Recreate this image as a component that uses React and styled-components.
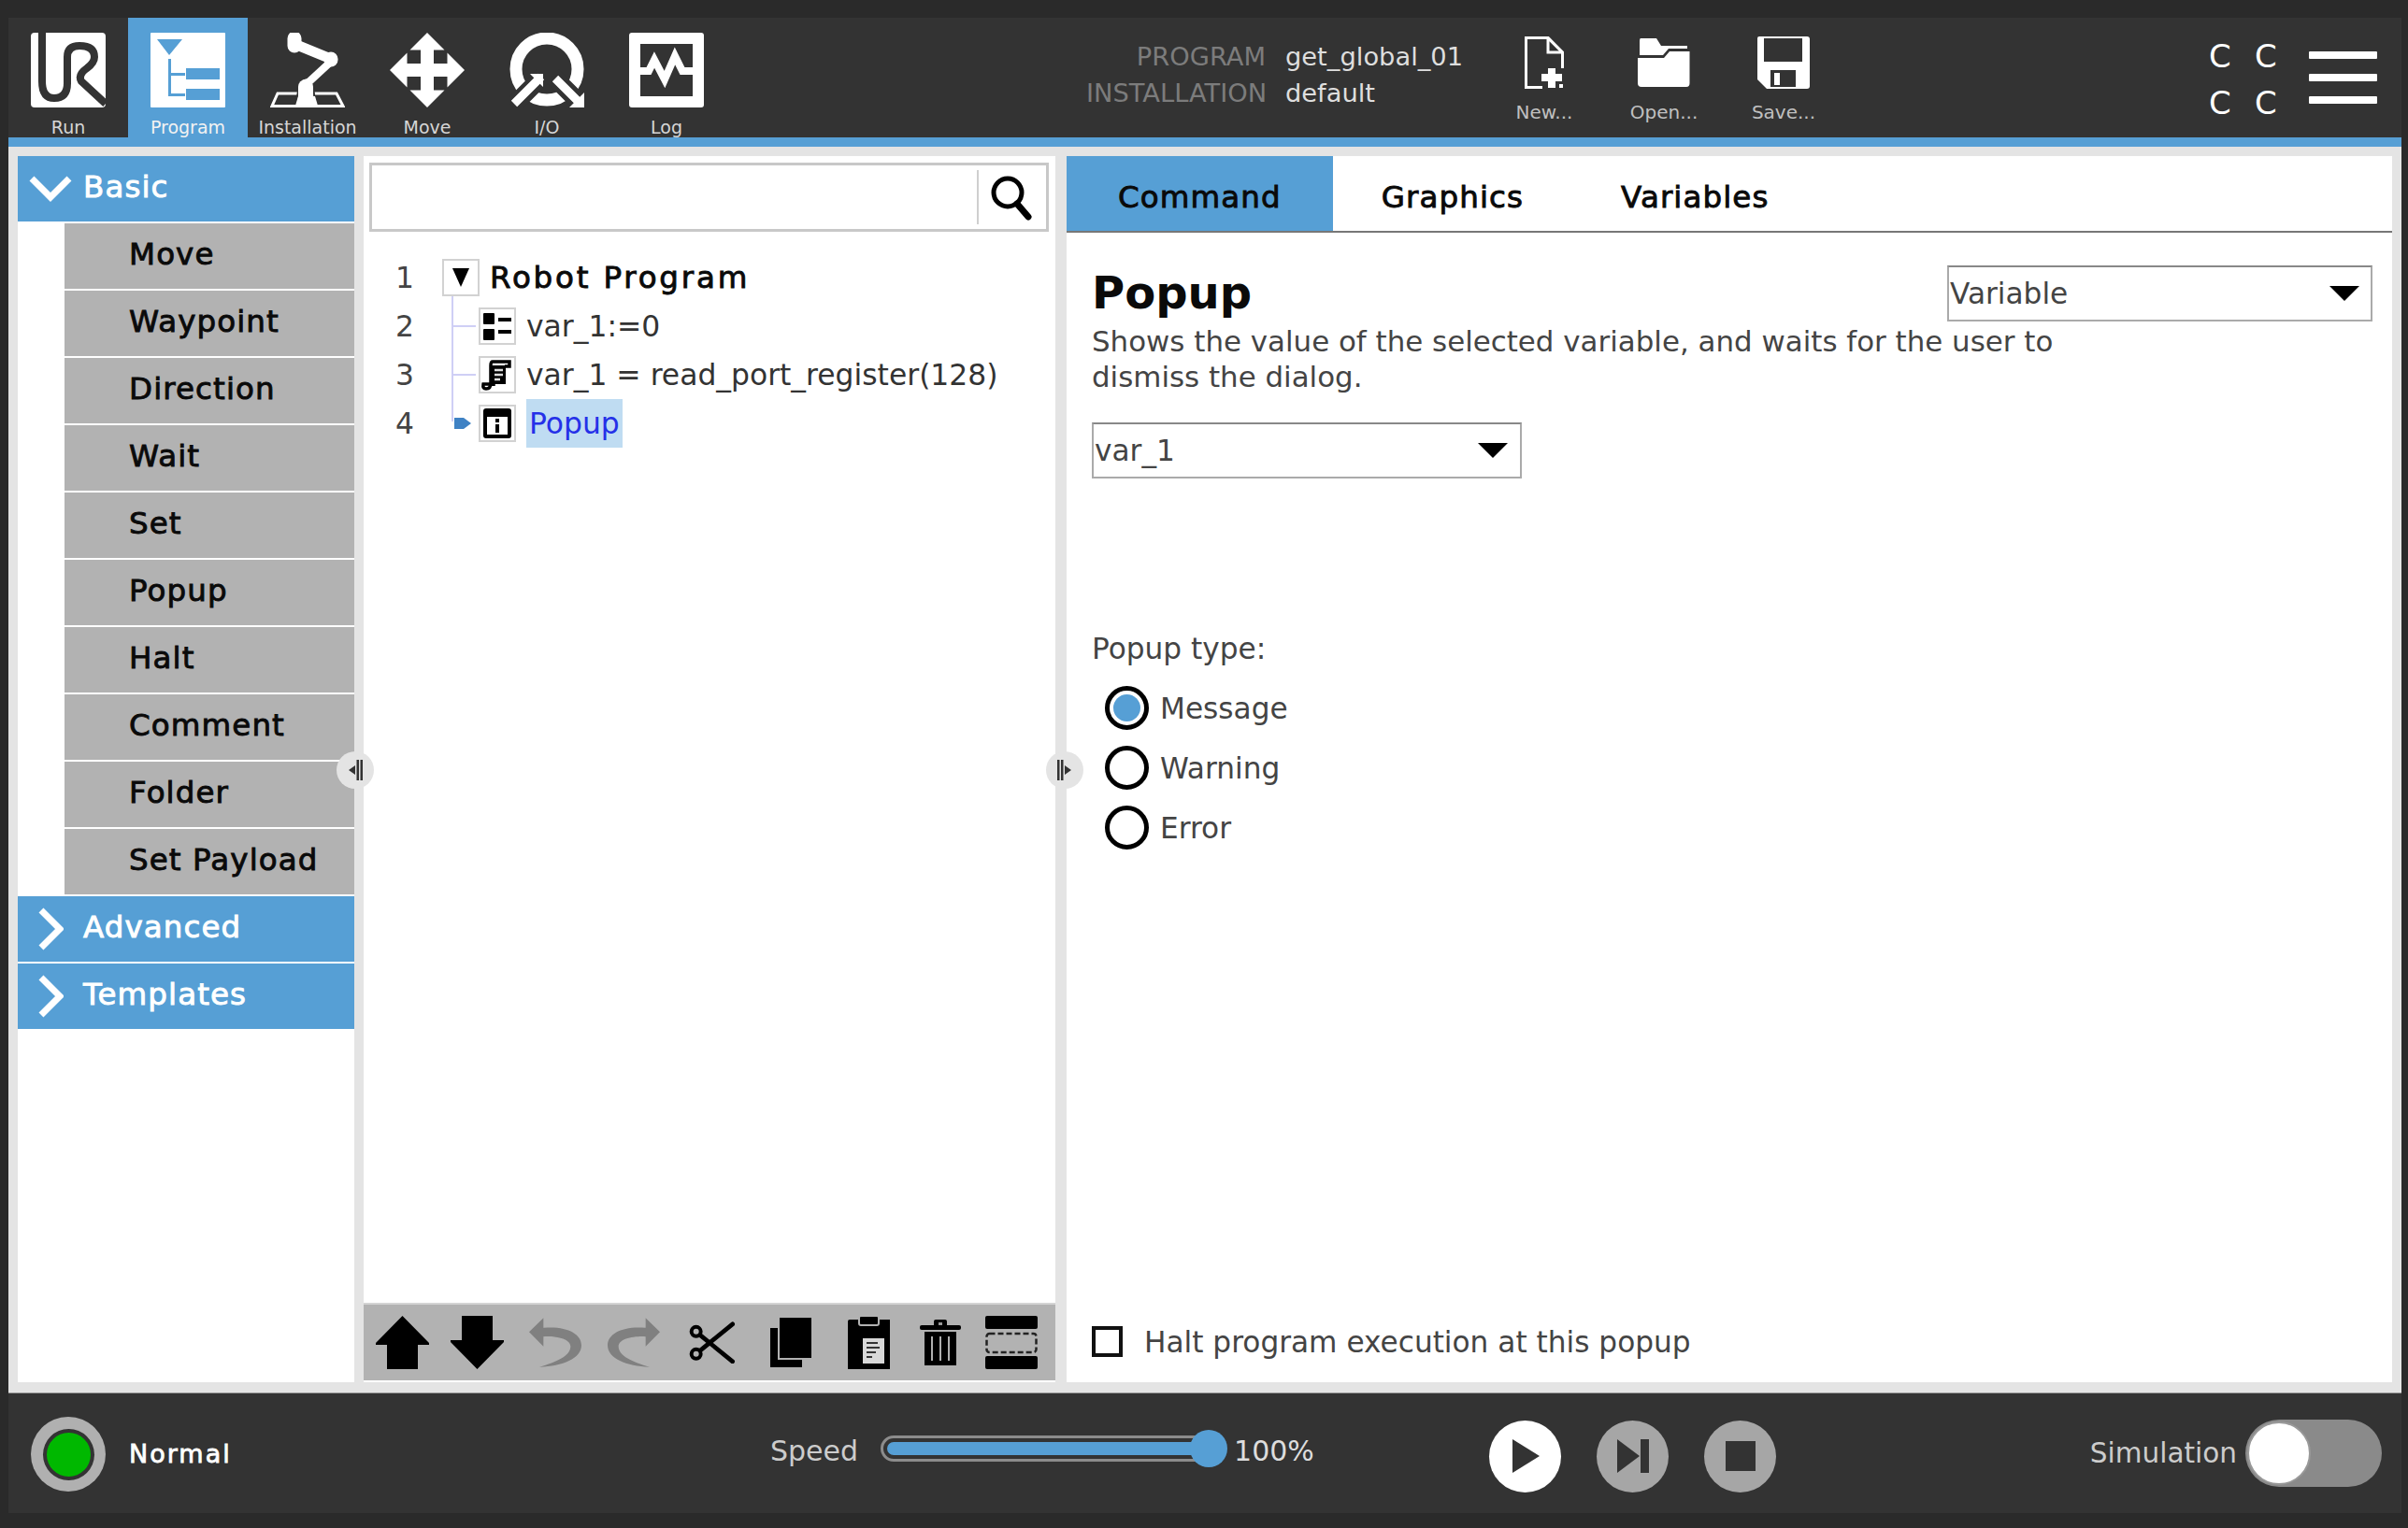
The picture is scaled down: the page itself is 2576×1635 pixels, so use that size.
import React from "react";
import styled, { createGlobalStyle, css } from "styled-components";

const BLUE = "#569fd5";

const Global = createGlobalStyle`
  * { box-sizing: border-box; }
  html, body { margin: 0; padding: 0; background: #2a2a2a; }
  body { font-family: "DejaVu Sans", sans-serif; }
`;

// the reference labels sit between regular and bold and are set wide
const medium = css`
  font-size: 32.5px;
  font-weight: 400;
  letter-spacing: 1.1px;
  -webkit-text-stroke: 0.9px currentColor;
`;

const Page = styled.div`
  width: 2576px;
  height: 1635px;
  padding: 19px 7px 16px 9px;
  background: #2a2a2a;
  display: flex;
  flex-direction: column;
  overflow: hidden;
`;

/* top bar */
const TopBar = styled.div`
  height: 128px;
  background: #333333;
  display: flex;
  flex: none;
`;
const BlueLine = styled.div`
  height: 10px;
  flex: none;
  background: ${BLUE};
`;
const NavItem = styled.div`
  width: 128px;
  height: 128px;
  padding-top: 16px;
  display: flex;
  flex-direction: column;
  align-items: center;
  background: ${({ $active }) => ($active ? BLUE : "transparent")};
  color: ${({ $active }) => ($active ? "#f2f2f2" : "#d6d6d6")};
  font-size: 19px;
  line-height: 22px;
  svg { display: block; margin-bottom: 10px; }
`;
const Info = styled.div`
  margin-left: 385px;
  width: 426px;
  padding-top: 26px;
  display: grid;
  grid-template-columns: 192px 1fr;
  column-gap: 21px;
  row-gap: 7px;
  grid-auto-rows: 32px;
  font-size: 27.3px;
  line-height: 32px;
`;
const InfoLabel = styled.div`
  text-align: right;
  color: #7c7c7c;
`;
const InfoValue = styled.div`
  color: #dedede;
`;
const FileButton = styled.div`
  width: 128px;
  padding-top: 20px;
  display: flex;
  flex-direction: column;
  align-items: center;
  color: #c0c0c0;
  font-size: 20px;
  line-height: 24px;
`;
const FileIcon = styled.div`
  height: 56px;
  margin-bottom: 13px;
  display: flex;
  align-items: center;
`;
const TopRight = styled.div`
  margin-left: auto;
  padding-right: 26px;
  display: flex;
  align-items: center;
`;
const Joints = styled.div`
  display: grid;
  grid-template-columns: 49px 24px;
  grid-auto-rows: 50px;
  margin-right: 34px;
  margin-top: 3px;
  color: #fff;
  font-size: 34px;
  line-height: 50px;
`;
const Burger = styled.div`
  width: 73px;
  display: flex;
  flex-direction: column;
  gap: 16px;
  span {
    display: block;
    height: 8px;
    background: #fff;
    border-radius: 1px;
  }
`;

/* middle */
const Middle = styled.div`
  position: relative;
  flex: 1;
  min-height: 0;
  background: #e4e4e4;
  padding: 10px 10px 11px;
  display: flex;
  border-bottom: 1px solid #999;
`;
const Sidebar = styled.div`
  width: 360px;
  flex: none;
  background: #fff;
  display: flex;
  flex-direction: column;
  gap: 2px;
  margin-right: 10px;
`;
const GroupHeader = styled.div`
  ${medium}
  height: 70px;
  flex: none;
  display: flex;
  align-items: center;
  background: ${BLUE};
  color: #fff;
`;
const Chevron = styled.div`
  width: 70px;
  display: flex;
  justify-content: center;
`;
const GroupName = styled.div`
  margin-bottom: 4px;
`;
const Item = styled.div`
  ${medium}
  height: 70px;
  flex: none;
  margin-left: 50px;
  padding: 0 0 4px 69px;
  display: flex;
  align-items: center;
  background: #b2b2b2;
  color: #0a0a0a;
`;

const TreePanel = styled.div`
  width: 740px;
  flex: none;
  margin-right: 12px;
  background: #fff;
  display: flex;
  flex-direction: column;
`;
const Search = styled.div`
  height: 74px;
  margin: 7px 7px 0 6px;
  flex: none;
  border: 3px solid #c8c8c8;
  display: flex;
  justify-content: flex-end;
  align-items: center;
  padding-right: 15px;
`;
const SearchDivider = styled.div`
  width: 2px;
  height: 58px;
  margin-right: 12px;
  background: #cfcfcf;
`;
const TreeList = styled.div`
  position: relative;
  flex: 1;
  margin-top: 23px;
`;
const TreeLine = styled.div`
  position: absolute;
  left: 94px;
  top: 46px;
  width: 2px;
  height: 134px;
  background: #cfcff5;
`;
const Row = styled.div`
  position: relative;
  height: 52px;
  display: flex;
  align-items: center;
  font-size: 31.4px;
  color: #333;
`;
const Num = styled.div`
  width: ${({ $wide }) => ($wide ? "123px" : "84px")};
  padding-left: 34px;
  flex: none;
  color: #444;
`;
const Tick = styled.div`
  position: absolute;
  left: 94px;
  top: 25px;
  width: 26px;
  height: 2px;
  background: #cfcff5;
`;
const Pointer = styled.svg`
  position: absolute;
  left: 97px;
  top: 17px;
`;
const IconBox = styled.div`
  width: 40px;
  height: 40px;
  flex: none;
  border: 2px solid #d2d2d2;
  display: flex;
  align-items: center;
  justify-content: center;
  margin-right: ${({ $gap }) => $gap}px;
`;
const RootLabel = styled.div`
  ${medium}
  letter-spacing: 2.8px;
  color: #0a0a0a;
`;
const NodeLabel = styled.div`
  height: 52px;
  line-height: 52px;
  padding: 0 ${({ $selected }) => ($selected ? "3px" : "0")};
  background: ${({ $selected }) => ($selected ? "#bfdcf2" : "transparent")};
  color: ${({ $selected }) => ($selected ? "#2530e8" : "#333")};
`;
const Toolbar = styled.div`
  height: 83px;
  flex: none;
  margin-bottom: 2px;
  padding-left: 13px;
  background: #b2b2b2;
  border-top: 2px solid #d4d4d4;
  display: flex;
  align-items: center;
`;
const Tool = styled.svg`
  flex: none;
  margin-left: ${({ $gap }) => $gap || 0}px;
`;

const CommandPanel = styled.div`
  flex: 1;
  min-width: 0;
  background: #fff;
  display: flex;
  flex-direction: column;
`;
const Tabs = styled.div`
  height: 82px;
  flex: none;
  display: flex;
  border-bottom: 2px solid #777;
`;
const Tab = styled.div`
  ${medium}
  padding: 8px ${({ $active }) => ($active ? "55px" : "52px")} 0;
  display: flex;
  align-items: center;
  background: ${({ $active }) => ($active ? BLUE : "transparent")};
  color: #0a0a0a;
`;
const Content = styled.div`
  flex: 1;
  padding: 35px 21px 27px 27px;
  display: flex;
  flex-direction: column;
  font-size: 31.2px;
  color: #444;
`;
const HeadRow = styled.div`
  display: flex;
  justify-content: space-between;
  align-items: flex-start;
  height: 62px;
`;
const Title = styled.div`
  font-size: 48px;
  line-height: 58px;
  font-weight: 700;
  color: #0a0a0a;
`;
const Desc = styled.div`
  width: 1060px;
  font-size: 30.9px;
  line-height: 38px;
`;
const Combo = styled.div`
  width: ${({ $w }) => $w}px;
  height: ${({ $h }) => $h}px;
  flex: none;
  padding: 0 ${({ $pad }) => $pad}px 0 1px;
  display: flex;
  align-items: center;
  justify-content: space-between;
  border: 2px solid #aaa;
  border-top-color: #888;
  color: #444;
`;
const ComboArrow = styled.div`
  width: 0;
  height: 0;
  border-left: 16px solid transparent;
  border-right: 16px solid transparent;
  border-top: 16px solid #000;
`;
const VarCombo = styled(Combo)`
  margin-top: 30px;
`;
const TypeLabel = styled.div`
  margin-top: 163px;
  line-height: 38px;
`;
const RadioList = styled.div`
  margin-top: 21px;
  padding-left: 14px;
  display: flex;
  flex-direction: column;
  gap: 17px;
`;
const RadioRow = styled.div`
  display: flex;
  align-items: center;
  gap: 12px;
  height: 47px;
`;
const Radio = styled.div`
  width: 47px;
  height: 47px;
  border-radius: 50%;
  border: 5px solid #000;
  display: flex;
  align-items: center;
  justify-content: center;
  &::after {
    content: "";
    display: ${({ $on }) => ($on ? "block" : "none")};
    width: 29px;
    height: 29px;
    border-radius: 50%;
    background: ${BLUE};
  }
`;
const HaltRow = styled.div`
  margin-top: auto;
  display: flex;
  align-items: center;
  gap: 23px;
  height: 33px;
`;
const CheckBox = styled.div`
  width: 33px;
  height: 33px;
  border: 4px solid #111;
`;
const Handle = styled.div`
  position: absolute;
  top: 647px;
  left: ${({ $x }) => $x}px;
  width: 40px;
  height: 40px;
  border-radius: 50%;
  background: #e4e4e4;
  display: flex;
  align-items: center;
  justify-content: center;
`;

/* bottom */
const BottomBar = styled.div`
  height: 128px;
  flex: none;
  background: #333333;
  display: flex;
  align-items: center;
`;
const StatusGroup = styled.div`
  width: 815px;
  flex: none;
  padding-left: 24px;
  display: flex;
  align-items: center;
  gap: 25px;
  color: #fff;
  font-size: 27px;
  letter-spacing: 2px;
  -webkit-text-stroke: 0.8px currentColor;
`;
const StatusLed = styled.div`
  width: 80px;
  height: 80px;
  margin-top: 2px;
  border-radius: 50%;
  background: #b0b0b0;
  display: flex;
  align-items: center;
  justify-content: center;
  &::after {
    content: "";
    width: 47px;
    height: 47px;
    border-radius: 50%;
    background: #00b800;
    box-shadow: 0 0 0 4px #333;
  }
`;
const SpeedGroup = styled.div`
  width: 769px;
  flex: none;
  display: flex;
  align-items: center;
  font-size: 30px;
  color: #ccc;
`;
const SpeedLabel = styled.div`
  margin-top: -6px;
`;
const Slider = styled.div`
  position: relative;
  width: 371px;
  height: 42px;
  margin: -10px 7px 0 24px;
  display: flex;
  align-items: center;
`;
const Track = styled.div`
  width: 350px;
  height: 28px;
  padding: 4px;
  border: 3px solid #8c8c8c;
  border-radius: 14px;
  background: #333;
`;
const Fill = styled.div`
  height: 14px;
  border-radius: 7px;
  background: ${BLUE};
`;
const Knob = styled.div`
  position: absolute;
  right: 0;
  top: 1px;
  width: 40px;
  height: 40px;
  border-radius: 50%;
  background: ${BLUE};
`;
const Percent = styled.div`
  color: #ddd;
  margin-top: -6px;
`;
const Controls = styled.div`
  margin-top: 6px;
  display: flex;
  gap: 38px;
`;
const PlayButton = styled.div`
  width: 77px;
  height: 77px;
  border-radius: 50%;
  background: ${({ $on }) => ($on ? "#fff" : "#a6a6a6")};
  display: flex;
  align-items: center;
  justify-content: center;
`;
const SimGroup = styled.div`
  margin-left: auto;
  padding-right: 21px;
  display: flex;
  align-items: center;
  gap: 9px;
  font-size: 29.5px;
  color: #ccc;
`;
const Switch = styled.div`
  position: relative;
  width: 146px;
  height: 72px;
  border-radius: 36px;
  background: #8a8a8a;
`;
const SwitchKnob = styled.div`
  position: absolute;
  left: 2px;
  top: 2px;
  width: 68px;
  height: 68px;
  border-radius: 50%;
  background: #fff;
  border: 2px solid #999;
`;

/* drawings */
const RunIcon = () => (
  <svg width="80" height="80" viewBox="0 0 80 80">
    <rect width="80" height="80" rx="4" fill="#fff" />
    <path d="M12 0V52Q12 70 25 70Q39 70 39 54V26Q39 14 52 14Q68 14 68 26Q68 32 60 38Q50 45 54 52L80 76" fill="none" stroke="#333" strokeWidth="8" />
  </svg>
);
const ProgramIcon = () => (
  <svg width="80" height="80" viewBox="0 0 80 80">
    <rect width="80" height="80" rx="1" fill="#fff" />
    <g fill={BLUE}>
      <path d="M7 7H34L20 24Z" />
      <rect x="19" y="28" width="3" height="40" />
      <rect x="19" y="43" width="18" height="3" />
      <rect x="19" y="65" width="18" height="3" />
      <rect x="38" y="38" width="36" height="12" />
      <rect x="38" y="60" width="36" height="12" />
    </g>
  </svg>
);
const InstallationIcon = () => (
  <svg width="80" height="80" viewBox="0 0 80 80">
    <path d="M8 65H71L78 78.500H2Z" fill="none" stroke="#fff" strokeWidth="3" />
    <path d="M28 75L31 56Q32 48 42 48H45L48 75Z" fill="#fff" stroke="#333" strokeWidth="2" />
    <g fill="none" stroke="#fff" strokeLinecap="round" strokeLinejoin="round">
      <path d="M26 12L65 28" strokeWidth="11" />
      <path d="M26 6V14" strokeWidth="15" />
      <path d="M66 30L40 54" strokeWidth="8" />
      <path d="M65 28V29" strokeWidth="15" />
      <path d="M38 58V72" strokeWidth="16" />
    </g>
    <path d="M27 78L30 68H48L51 78Z" fill="#fff" />
  </svg>
);
const MoveIcon = () => (
  <svg width="80" height="80" viewBox="0 0 80 80">
    <path fill="#fff" d="M40 0L58.500 18.500H47V33H61.500V21.500L80 40L61.500 58.500V47H47V61.500H58.500L40 80L21.500 61.500H33V47H18.500V58.500L0 40L18.500 21.500V33H33V18.500H21.500Z" />
  </svg>
);
const IoIcon = () => (
  <svg width="80" height="80" viewBox="0 0 80 80">
    <circle cx="40" cy="39" r="33" fill="none" stroke="#fff" strokeWidth="13" />
    <path d="M3 79L36 46M46 46L80 80" stroke="#333" strokeWidth="19" />
    <path d="M5 76L34 47M49 49L74 74" stroke="#fff" strokeWidth="9" />
    <path d="M22 44H36V58Z M80 80H64L80 64Z" fill="#fff" />
  </svg>
);
const LogIcon = () => (
  <svg width="80" height="80" viewBox="0 0 80 80">
    <rect width="80" height="80" rx="3" fill="#fff" />
    <rect x="12" y="12" width="56" height="56" fill="#333" />
    <path d="M12 41H21L27 29L38 50L49 25L57 41H68" fill="none" stroke="#fff" strokeWidth="8" />
  </svg>
);
const NewIcon = () => (
  <svg width="42" height="56" viewBox="0 0 42 56">
    <path d="M19 54.500H1.500V1.500H25L40.500 17V34" fill="none" stroke="#fff" strokeWidth="3" />
    <path d="M25 1.500V17H40.500Z" fill="none" stroke="#fff" strokeWidth="3" />
    <path d="M25 34H33V40H40V48H33V55H25V48H18V40H25Z" fill="#fff" />
    <rect x="37" y="51" width="4" height="4" fill="#fff" />
  </svg>
);
const OpenIcon = () => (
  <svg width="56" height="52" viewBox="0 0 56 52">
    <path fill="#fff" d="M3 0H20L25 8H53V11H33L27 18H2V3Q2 0 3 0Z" />
    <path fill="#fff" d="M0 21H28L34 14H55.500V48Q55.500 52 52 52H4Q0 52 0 48Z" />
  </svg>
);
const SaveIcon = () => (
  <svg width="56" height="56" viewBox="0 0 56 56">
    <path fill="#fff" d="M2 0H53Q56 0 56 3V53Q56 56 53 56H10L0 46V2Q0 0 2 0Z" />
    <rect x="7" y="2" width="41" height="25" fill="#333" />
    <rect x="14" y="36" width="27" height="18" fill="#333" />
    <rect x="18" y="39" width="6" height="13" fill="#fff" />
  </svg>
);
const SearchIcon = () => (
  <svg width="45" height="49" viewBox="0 0 45 49">
    <circle cx="19" cy="19" r="15" fill="none" stroke="#000" strokeWidth="5" />
    <path d="M29 31L41 45" stroke="#000" strokeWidth="7" strokeLinecap="round" />
  </svg>
);
const ChevronDown = () => (
  <svg width="46" height="28" viewBox="0 0 46 28">
    <path d="M3 3L23 23L43 3" fill="none" stroke="#fff" strokeWidth="7" />
  </svg>
);
const ChevronRight = () => (
  <svg width="28" height="46" viewBox="0 0 28 46">
    <path d="M4 3L24 23L4 43" fill="none" stroke="#fff" strokeWidth="7" />
  </svg>
);
const AssignIcon = () => (
  <svg width="36" height="36" viewBox="0 0 36 36">
    <rect x="3" y="4" width="12" height="12" rx="1" />
    <rect x="3" y="21" width="12" height="12" rx="1" />
    <rect x="19" y="9" width="14" height="4" />
    <rect x="19" y="22" width="14" height="4" />
  </svg>
);
const ScriptIcon = () => (
  <svg width="36" height="36" viewBox="0 0 36 36">
    <path d="M13 4H31V9H26M13 4Q11 4 11 8V27Q11 33 6 33Q2 33 3 28H14V30" fill="none" stroke="#000" strokeWidth="3.500" />
    <path d="M11 8H27V28H11Z" fill="#000" />
    <path d="M15 13H24M15 18H24M15 23H21" stroke="#ddd" strokeWidth="2.500" />
  </svg>
);
const PopupIcon = () => (
  <svg width="36" height="36" viewBox="0 0 36 36">
    <rect x="3" y="2" width="30" height="32" rx="3" />
    <rect x="7" y="11" width="22" height="19" fill="#fff" />
    <rect x="16" y="13" width="4" height="4" />
    <rect x="16" y="19" width="4" height="9" />
  </svg>
);
const UNDO = "M532 95L578 50V82C650 75 700 100 700 138C700 180 640 205 565 208C620 192 665 172 665 142C665 118 620 108 578 110V142Z";
const ToolIcons = () => (
  <>
    <Tool width="57" height="57" viewBox="0 0 57 57">
      <path d="M28.500 0L57 29V31H45V57H12V31H0V29Z" />
    </Tool>
    <Tool $gap={23} width="57" height="57" viewBox="0 0 57 57">
      <path d="M12 0H45V26H57V28L28.500 57L0 28V26H12Z" />
    </Tool>
    <Tool $gap={27} width="56" height="53" viewBox="532 50 168 158">
      <path d={UNDO} fill="#808080" />
    </Tool>
    <Tool $gap={28} width="56" height="53" viewBox="532 50 168 158">
      <path d={UNDO} fill="#808080" transform="matrix(-1 0 0 1 1232 0)" />
    </Tool>
    <Tool $gap={31} width="50" height="45" viewBox="1045 58 150 134">
      <circle cx="1068" cy="90" r="15" fill="none" stroke="#000" strokeWidth="12" />
      <circle cx="1068" cy="162" r="15" fill="none" stroke="#000" strokeWidth="12" />
      <path d="M1082 150L1185 66M1082 102L1185 186" stroke="#000" strokeWidth="14" strokeLinecap="round" />
    </Tool>
    <Tool $gap={37} width="44" height="53" viewBox="0 0 44 53">
      <rect x="10" y="0" width="34" height="43" />
      <path d="M0 11H8V45H34V53H0Z" />
    </Tool>
    <Tool $gap={39} width="45" height="57" viewBox="0 0 45 57">
      <path d="M2 4H45V57H0V6Q0 4 2 4Z" />
      <rect x="12" y="0" width="21" height="10" rx="2" stroke="#b2b2b2" strokeWidth="2" />
      <rect x="16" y="24" width="23" height="27" fill="#d8d8d8" />
      <path d="M20 29H32M20 34H34M20 39H30M20 44H26" stroke="#333" strokeWidth="2" />
    </Tool>
    <Tool $gap={32} width="44" height="49" viewBox="0 0 44 49">
      <rect x="15" y="0" width="14" height="8" rx="2" />
      <rect x="20" y="3" width="4" height="3" fill="#999" />
      <rect x="0" y="6" width="44" height="5" rx="2" />
      <path d="M5 13H39V49H5Z" />
      <path d="M13 18V44M22 18V44M31 18V44" stroke="#b0b0b0" strokeWidth="2" />
    </Tool>
    <Tool $gap={26} width="56" height="57" viewBox="0 0 56 57">
      <rect width="56" height="14" rx="2" />
      <rect y="43" width="56" height="14" rx="2" />
      <rect x="1.500" y="19" width="53" height="20" rx="3" fill="none" stroke="#222" strokeWidth="2.500" strokeDasharray="6 3" />
    </Tool>
  </>
);
const HandleIcon = ({ flip }) => (
  <svg width="24" height="24" viewBox="0 0 24 24" transform={flip ? "scale(-1 1)" : undefined}>
    <rect x="4" y="1" width="2.500" height="22" fill="#333" />
    <rect x="8" y="1" width="2.500" height="22" fill="#333" />
    <path d="M12 7L19 12L12 17Z" fill="#333" />
  </svg>
);

const NAV = [
  ["Run", RunIcon],
  ["Program", ProgramIcon],
  ["Installation", InstallationIcon],
  ["Move", MoveIcon],
  ["I/O", IoIcon],
  ["Log", LogIcon],
];
const FILES = [
  ["New...", NewIcon],
  ["Open...", OpenIcon],
  ["Save...", SaveIcon],
];
const BASIC = ["Move", "Waypoint", "Direction", "Wait", "Set", "Popup", "Halt", "Comment", "Folder", "Set Payload"];

function App() {
  return (
    <Page>
      <Global />
      <TopBar>
        {NAV.map(([label, Icon]) => (
          <NavItem key={label} $active={label === "Program"}>
            <Icon />
            {label}
          </NavItem>
        ))}
        <Info>
          <InfoLabel>PROGRAM</InfoLabel>
          <InfoValue>get_global_01</InfoValue>
          <InfoLabel>INSTALLATION</InfoLabel>
          <InfoValue>default</InfoValue>
        </Info>
        {FILES.map(([label, Icon]) => (
          <FileButton key={label}>
            <FileIcon><Icon /></FileIcon>
            {label}
          </FileButton>
        ))}
        <TopRight>
          <Joints>
            <span>C</span><span>C</span><span>C</span><span>C</span>
          </Joints>
          <Burger><span /><span /><span /></Burger>
        </TopRight>
      </TopBar>
      <BlueLine />

      <Middle>
        <Sidebar>
          <GroupHeader>
            <Chevron><ChevronDown /></Chevron>
            <GroupName>Basic</GroupName>
          </GroupHeader>
          {BASIC.map((name) => <Item key={name}>{name}</Item>)}
          <GroupHeader>
            <Chevron><ChevronRight /></Chevron>
            <GroupName>Advanced</GroupName>
          </GroupHeader>
          <GroupHeader>
            <Chevron><ChevronRight /></Chevron>
            <GroupName>Templates</GroupName>
          </GroupHeader>
        </Sidebar>

        <TreePanel>
          <Search>
            <SearchDivider />
            <SearchIcon />
          </Search>
          <TreeList>
            <TreeLine />
            <Row>
              <Num>1</Num>
              <IconBox $gap={11}>
                <svg width="18" height="20" viewBox="0 0 18 20"><path d="M0 0H18L9 20Z" /></svg>
              </IconBox>
              <RootLabel>Robot Program</RootLabel>
            </Row>
            <Row>
              <Tick />
              <Num $wide>2</Num>
              <IconBox $gap={11}><AssignIcon /></IconBox>
              <NodeLabel>var_1:=0</NodeLabel>
            </Row>
            <Row>
              <Tick />
              <Num $wide>3</Num>
              <IconBox $gap={11}><ScriptIcon /></IconBox>
              <NodeLabel>var_1 = read_port_register(128)</NodeLabel>
            </Row>
            <Row>
              <Pointer width="18" height="18" viewBox="0 0 18 18">
                <path d="M0 3H10L18 9L10 15H0Z" fill="#3f82c4" />
              </Pointer>
              <Num $wide>4</Num>
              <IconBox $gap={11}><PopupIcon /></IconBox>
              <NodeLabel $selected>Popup</NodeLabel>
            </Row>
          </TreeList>
          <Toolbar><ToolIcons /></Toolbar>
        </TreePanel>

        <CommandPanel>
          <Tabs>
            <Tab $active>Command</Tab>
            <Tab>Graphics</Tab>
            <Tab>Variables</Tab>
          </Tabs>
          <Content>
            <HeadRow>
              <Title>Popup</Title>
              <Combo $w={455} $h={60} $pad={12}>
                Variable
                <ComboArrow />
              </Combo>
            </HeadRow>
            <Desc>Shows the value of the selected variable, and waits for the user to dismiss the dialog.</Desc>
            <VarCombo $w={460} $h={60} $pad={13}>
              var_1
              <ComboArrow />
            </VarCombo>
            <TypeLabel>Popup type:</TypeLabel>
            <RadioList>
              <RadioRow><Radio $on />Message</RadioRow>
              <RadioRow><Radio />Warning</RadioRow>
              <RadioRow><Radio />Error</RadioRow>
            </RadioList>
            <HaltRow>
              <CheckBox />
              Halt program execution at this popup
            </HaltRow>
          </Content>
        </CommandPanel>

        <Handle $x={351}><HandleIcon flip /></Handle>
        <Handle $x={1110}><HandleIcon /></Handle>
      </Middle>

      <BottomBar>
        <StatusGroup>
          <StatusLed />
          Normal
        </StatusGroup>
        <SpeedGroup>
          <SpeedLabel>Speed</SpeedLabel>
          <Slider>
            <Track><Fill /></Track>
            <Knob />
          </Slider>
          <Percent>100%</Percent>
        </SpeedGroup>
        <Controls>
          <PlayButton $on>
            <svg width="34" height="36" viewBox="0 0 34 36"><path d="M3 0L32 18L3 36Z" fill="#333" /></svg>
          </PlayButton>
          <PlayButton>
            <svg width="38" height="36" viewBox="0 0 38 36"><path d="M2 0L26 18L2 36Z M27 0H36V36H27Z" fill="#333" /></svg>
          </PlayButton>
          <PlayButton>
            <svg width="32" height="32" viewBox="0 0 32 32"><rect width="32" height="32" fill="#333" /></svg>
          </PlayButton>
        </Controls>
        <SimGroup>
          Simulation
          <Switch><SwitchKnob /></Switch>
        </SimGroup>
      </BottomBar>
    </Page>
  );
}

export default App;
